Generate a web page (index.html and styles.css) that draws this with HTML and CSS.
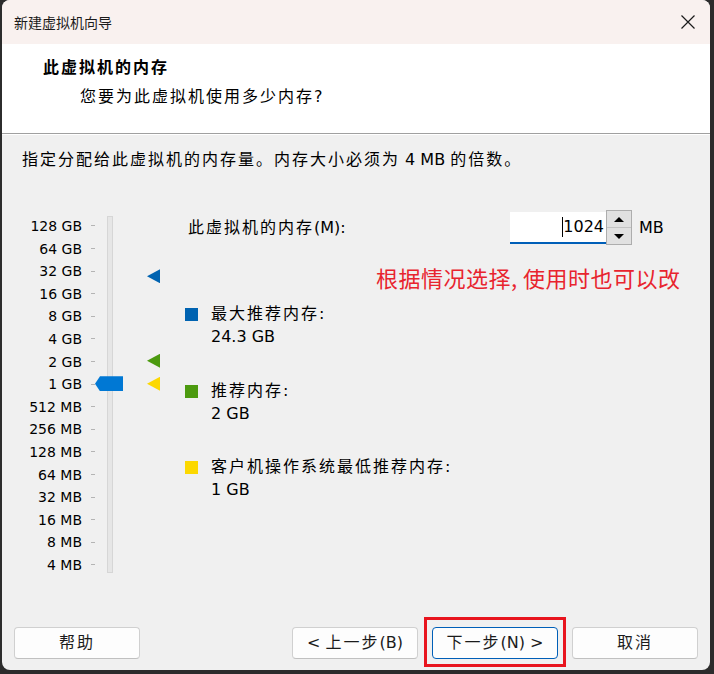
FILE: index.html
```html
<!DOCTYPE html>
<html lang="zh-CN">
<head>
<meta charset="utf-8">
<title>新建虚拟机向导</title>
<link rel="stylesheet" href="styles.css">
</head>
<body>
<div class="window">
  <div class="titlebar">
    <span class="title">新建虚拟机向导</span>
    <svg class="close" width="14" height="14" viewBox="0 0 14 14"><path d="M0.5 0.5 L13.5 13.5 M13.5 0.5 L0.5 13.5" stroke="#1b1b1b" stroke-width="1.2" fill="none"/></svg>
  </div>
  <div class="header">
    <div class="h-title">此虚拟机的内存</div>
    <div class="h-sub">您要为此虚拟机使用多少内存<span class="l">?</span></div>
  </div>
  <div class="content">
    <p class="desc">指定分配给此虚拟机的内存量。内存大小必须为<span class="l"> 4 MB </span>的倍数。</p>
    <div class="panel">
      <div class="slider">
        <div class="scale">
          <div class="row"><span class="lbl">128 GB</span></div>
          <div class="row"><span class="lbl">64 GB</span></div>
          <div class="row"><span class="lbl">32 GB</span></div>
          <div class="row"><span class="lbl">16 GB</span></div>
          <div class="row"><span class="lbl">8 GB</span></div>
          <div class="row"><span class="lbl">4 GB</span></div>
          <div class="row"><span class="lbl">2 GB</span></div>
          <div class="row"><span class="lbl">1 GB</span></div>
          <div class="row"><span class="lbl">512 MB</span></div>
          <div class="row"><span class="lbl">256 MB</span></div>
          <div class="row"><span class="lbl">128 MB</span></div>
          <div class="row"><span class="lbl">64 MB</span></div>
          <div class="row"><span class="lbl">32 MB</span></div>
          <div class="row"><span class="lbl">16 MB</span></div>
          <div class="row"><span class="lbl">8 MB</span></div>
          <div class="row"><span class="lbl">4 MB</span></div>
        </div>
        <div class="track"></div>
        <div class="thumb" style="top:161.5px"></div>
        <div class="marker m-blue" style="top:54.5px"></div>
        <div class="marker m-green" style="top:139px"></div>
        <div class="marker m-yellow" style="top:162px"></div>
      </div>
      <div class="settings">
        <div class="mem-row">
          <span class="mem-label">此虚拟机的内存<span class="l">(M):</span></span>
          <div class="input"><span class="caret"></span><span class="val">1024</span></div>
          <div class="spin">
            <div class="spin-btn"><span class="arr-up"></span></div>
            <div class="spin-btn"><span class="arr-down"></span></div>
          </div>
          <span class="unit">MB</span>
        </div>
        <div class="note">根据情况选择, 使用时也可以改</div>
        <div class="legend">
          <div class="item">
            <span class="sq sq-blue"></span>
            <div class="item-text"><div>最大推荐内存:</div><div class="num">24.3 GB</div></div>
          </div>
          <div class="item">
            <span class="sq sq-green"></span>
            <div class="item-text"><div>推荐内存:</div><div class="num">2 GB</div></div>
          </div>
          <div class="item">
            <span class="sq sq-yellow"></span>
            <div class="item-text"><div>客户机操作系统最低推荐内存:</div><div class="num">1 GB</div></div>
          </div>
        </div>
      </div>
    </div>
    <div class="footer">
      <button class="btn">帮助</button>
      <div class="right-btns">
        <button class="btn"><span class="l">&lt; </span>上一步<span class="l">(B)</span></button>
        <div class="highlight"><button class="btn btn-default">下一步<span class="l">(N) &gt;</span></button></div>
        <button class="btn">取消</button>
      </div>
    </div>
  </div>
</div>
</body>
</html>
```
FILE: styles.css
```css
html, body {
  margin: 0;
  padding: 0;
}
body {
  background: #2c2c2c;
  width: 714px;
  height: 674px;
  overflow: hidden;
}
.window {
  margin-left: 2px;
  width: 708px;
  height: 670px;
  border-radius: 8px;
  overflow: hidden;
  background: #f0f0f0;
  display: flex;
  flex-direction: column;
  font-family: "DejaVu Sans", "Noto Sans CJK SC", sans-serif;
  font-size: 16px;
  letter-spacing: 2px;
  color: #000;
}
.l {
  letter-spacing: 0;
}
.titlebar {
  height: 44px;
  flex: none;
  background: #f9f1ef;
  display: flex;
  align-items: center;
  justify-content: space-between;
  padding: 0 15px 0 12px;
}
.title {
  font-family: "Noto Sans CJK SC", sans-serif;
  font-size: 14px;
  letter-spacing: 0;
  color: #1b1b1b;
}
.close {
  display: block;
}
.header {
  flex: none;
  height: 90px;
  box-sizing: border-box;
  background: #fff;
  border-bottom: 1px solid #a0a0a0;
  padding-top: 12px;
  box-shadow: 0 1px 0 #ffffff;
}
.h-title {
  padding-left: 41px;
  line-height: 24px;
  font-weight: 700;
}
.h-sub {
  padding-left: 78px;
  margin-top: 5px;
  line-height: 24px;
}
.content {
  flex: 1;
  display: flex;
  flex-direction: column;
}
.desc {
  margin: 14px 0 0 20px;
  line-height: 24px;
}
.panel {
  display: flex;
  gap: 20px;
  margin-top: 38px;
  padding-left: 20px;
}
.slider {
  position: relative;
  width: 143px;
  margin-top: 4.7px;
  display: flex;
  flex: none;
}
.scale {
  display: flex;
  flex-direction: column;
  width: 73px;
}
.row {
  height: 22.6px;
  display: flex;
  align-items: center;
  font-size: 14px;
  letter-spacing: 0;
}
.lbl {
  width: 60px;
  text-align: right;
  white-space: nowrap;
}
.row::after {
  content: "";
  width: 4px;
  height: 1px;
  margin-left: 9px;
  background: #b4b4b4;
}
.track {
  margin: 1.3px 0 3px 12px;
  width: 6px;
  box-sizing: border-box;
  background: #e6e6e6;
  border: 1px solid #d6d6d6;
}
.thumb {
  position: absolute;
  left: 73px;
  width: 28px;
  height: 15px;
  background: #0078d4;
  clip-path: polygon(0 50%, 5px 0, 100% 0, 100% 100%, 5px 100%);
}
.marker {
  position: absolute;
  left: 125px;
  width: 13px;
  height: 14px;
  clip-path: polygon(0 50%, 100% 0, 100% 100%);
}
.m-blue { background: #0063b1; }
.m-green { background: #4c9a0f; }
.m-yellow { background: #fcd800; }
.settings {
  flex: 1;
}
.mem-row {
  display: flex;
  align-items: center;
  height: 35px;
}
.mem-label {
  width: 322px;
  padding-left: 3px;
  line-height: 24px;
  white-space: nowrap;
}
.input {
  width: 96px;
  height: 32px;
  box-sizing: border-box;
  background: #fff;
  border-bottom: 2px solid #005fb8;
  display: flex;
  align-items: center;
  justify-content: flex-end;
  padding-right: 2px;
  letter-spacing: 0;
}
.caret {
  width: 1px;
  height: 20px;
  background: #000;
}
.val {
  line-height: 20px;
}
.spin {
  width: 26px;
  height: 35px;
  box-sizing: border-box;
  border: 1px solid #adadad;
  background: #e1e1e1;
  display: flex;
  flex-direction: column;
}
.spin-btn {
  flex: 1;
  display: flex;
  align-items: center;
  justify-content: center;
}
.spin-btn + .spin-btn {
  border-top: 1px solid #c4c4c4;
}
.arr-up {
  width: 0;
  height: 0;
  border-left: 5px solid transparent;
  border-right: 5px solid transparent;
  border-bottom: 5px solid #000;
}
.arr-down {
  width: 0;
  height: 0;
  border-left: 5px solid transparent;
  border-right: 5px solid transparent;
  border-top: 5px solid #000;
}
.unit {
  margin-left: 7px;
  letter-spacing: 0;
}
.note {
  margin: 17px 0 0 191px;
  line-height: 30px;
  font-family: "Noto Sans CJK SC", sans-serif;
  font-size: 22px;
  letter-spacing: 0.5px;
  color: #e8242e;
  white-space: nowrap;
}
.legend {
  margin-top: 10px;
  display: flex;
  flex-direction: column;
  gap: 30.5px;
}
.item {
  display: flex;
  align-items: flex-start;
}
.sq {
  width: 13px;
  height: 13px;
  margin-top: 6px;
  flex: none;
}
.sq-blue { background: #0063b1; }
.sq-green { background: #4c9a0f; }
.sq-yellow { background: #fcd800; }
.item-text {
  margin-left: 13px;
  line-height: 23px;
}
.num {
  letter-spacing: 0;
}
.footer {
  margin-top: auto;
  padding: 0 12px 11px 12px;
  display: flex;
  justify-content: space-between;
  align-items: flex-end;
}
.right-btns {
  display: flex;
  gap: 14px;
}
.btn {
  width: 126px;
  height: 32px;
  box-sizing: border-box;
  background: #fdfdfd;
  border: 1px solid #d0d0d0;
  border-bottom-color: #c0c0c0;
  border-radius: 4px;
  font-family: "DejaVu Sans", "Noto Sans CJK SC", sans-serif;
  font-size: 16px;
  letter-spacing: 2px;
  color: #1b1b1b;
  padding: 0;
  line-height: 24px;
}
.btn-default {
  border: 1px solid #005fb8;
}
.highlight {
  position: relative;
}
.highlight::after {
  content: "";
  position: absolute;
  top: -10px;
  bottom: -8px;
  left: -8px;
  right: -8px;
  border: 3px solid #e8141e;
  pointer-events: none;
}
```
